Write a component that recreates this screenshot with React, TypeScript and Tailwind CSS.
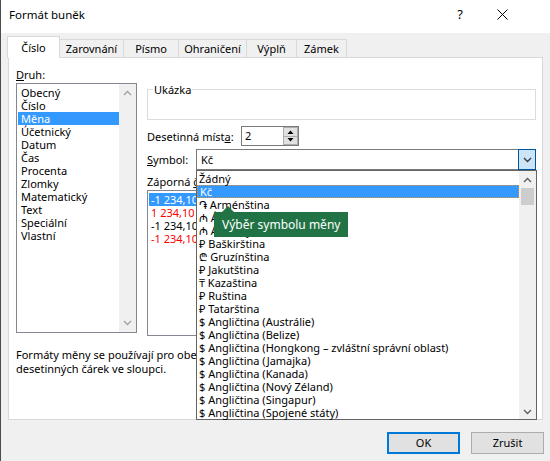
import React from "react";

const categories = [
  "Obecný",
  "Číslo",
  "Měna",
  "Účetnický",
  "Datum",
  "Čas",
  "Procenta",
  "Zlomky",
  "Matematický",
  "Text",
  "Speciální",
  "Vlastní",
];

const negatives = [
  { text: "-1 234,10 Kč", cls: "bg-[#3399ff] text-white" },
  { text: "1 234,10 Kč", cls: "text-[#ff0000]" },
  { text: "-1 234,10 Kč", cls: "text-black" },
  { text: "-1 234,10 Kč", cls: "text-[#ff0000]" },
];

const symbols = [
  "Žádný",
  "Kč",
  "֏ Arménština",
  "₼ Ázerbájdžánština (cyrilice)",
  "₼ Ázerbájdžánština (latinka)",
  "₽ Baškirština",
  "₾ Gruzínština",
  "₽ Jakutština",
  "₸ Kazaština",
  "₽ Ruština",
  "₽ Tatarština",
  "$ Angličtina (Austrálie)",
  "$ Angličtina (Belize)",
  "$ Angličtina (Hongkong – zvláštní správní oblast)",
  "$ Angličtina (Jamajka)",
  "$ Angličtina (Kanada)",
  "$ Angličtina (Nový Zéland)",
  "$ Angličtina (Singapur)",
  "$ Angličtina (Spojené státy)",
];

const tabs = [
  { label: "Zarovnání", w: "w-[65px]" },
  { label: "Písmo", w: "w-[56px]" },
  { label: "Ohraničení", w: "w-[69px]" },
  { label: "Výplň", w: "w-[51px]" },
  { label: "Zámek", w: "w-[51px]" },
];

function Chevron({ up, color }: { up?: boolean; color: string }) {
  return (
    <svg width="9" height="6" viewBox="0 0 9 6">
      <path
        d={up ? "M1 5 L4.5 1.5 L8 5" : "M1 1 L4.5 4.5 L8 1"}
        fill="none"
        stroke={color}
        strokeWidth="1.4"
      />
    </svg>
  );
}

function Triangle({ up }: { up?: boolean }) {
  return (
    <svg width="7" height="4" viewBox="0 0 7 4">
      <path d={up ? "M0.5 4 L3.5 0.5 L6.5 4 Z" : "M0.5 0 L3.5 3.5 L6.5 0 Z"} fill="#000" />
    </svg>
  );
}

export default function App() {
  return (
    <div className="relative w-[550px] h-[461px] overflow-hidden border-l border-[#4d4d4d] bg-[#f0f0f0] text-[11px] leading-[13px] text-black [font-family:'Noto_Sans',sans-serif]">
      {/* title bar */}
      <div className="h-[33px] bg-white">
        <div className="flex h-[28px] items-center pl-[8px]">
          <span className="text-[11.5px]">Formát buněk</span>
          <span className="ml-auto mr-[34px] text-[13px] leading-[13px]">?</span>
          <svg width="11" height="11" viewBox="0 0 11 11" className="mr-[42px]">
            <path d="M0.5 0.5 L10.5 10.5 M10.5 0.5 L0.5 10.5" stroke="#000" strokeWidth="1" />
          </svg>
        </div>
      </div>

      {/* tab strip */}
      <div className="flex h-[24px] items-end pl-[6px]">
        <div className="relative z-10 -mb-px flex h-[22px] w-[53px] items-center justify-center border border-b-0 border-[#d9d9d9] bg-white pb-[1px]">
          Číslo
        </div>
        {tabs.map((t) => (
          <div
            key={t.label}
            className={`-ml-px flex h-[18px] ${t.w} items-center justify-center border border-b-0 border-[#d9d9d9] bg-[#f0f0f0]`}
          >
            {t.label}
          </div>
        ))}
      </div>

      {/* tab page */}
      <div className="ml-[7px] h-[363px] w-[535px] border border-[#d9d9d9] bg-white">
        <div className="flex pl-[7px] pt-[10px]">
          {/* category column */}
          <div className="w-[121px]">
            <div className="h-[13px]">
              <span className="underline underline-offset-[1px]">D</span>ruh:
            </div>
            <div className="mt-[2px] flex h-[250px] border border-[#828790]">
              <div className="flex-1 pt-[2px]">
                {categories.map((c) => (
                  <div
                    key={c}
                    className={`ml-px h-[13px] pl-[3px] ${c === "Měna" ? "bg-[#3399ff] text-white" : ""}`}
                  >
                    {c}
                  </div>
                ))}
              </div>
              <div className="flex w-[17px] flex-col items-center justify-between bg-[#f0f0f0] py-[6px]">
                <Chevron up color="#a3a3a3" />
                <Chevron color="#a3a3a3" />
              </div>
            </div>
          </div>

          {/* settings column */}
          <div className="ml-[10px] mt-[21px] w-[389px]">
            <div className="relative h-[31px] border border-[#dcdcdc]">
              <span className="absolute -top-[7px] left-[5px] bg-white px-[1px]">Ukázka</span>
            </div>

            <div className="mt-[6px] flex h-[20px] items-center">
              <span className="w-[94px]">
                Desetinná míst<span className="underline underline-offset-[1px]">a</span>:
              </span>
              <div className="flex h-[20px] w-[58px] border border-[#7a7a7a] bg-white">
                <span className="flex-1 pl-[3px] leading-[18px]">2</span>
                <div className="flex w-[15px] flex-col">
                  <div className="flex flex-1 items-center justify-center border border-[#adadad] bg-[#e1e1e1]">
                    <Triangle up />
                  </div>
                  <div className="-mt-px flex flex-1 items-center justify-center border border-[#adadad] bg-[#e1e1e1]">
                    <Triangle />
                  </div>
                </div>
              </div>
            </div>

            <div className="mt-[3px] flex h-[21px] items-center">
              <span className="w-[49px]">
                <span className="underline underline-offset-[1px]">S</span>ymbol:
              </span>
              <div className="flex h-[21px] flex-1 border border-[#7a7a7a] bg-white">
                <span className="flex-1 pl-[4px] leading-[19px]">Kč</span>
                <div className="-my-px -mr-px flex w-[18px] items-center justify-center border border-[#005499] bg-[#cce4f7]">
                  <Chevron color="#3c3c3c" />
                </div>
              </div>
            </div>

            <div className="mt-[5px] h-[13px]">
              Záporná <span className="underline underline-offset-[1px]">č</span>ísla:
            </div>
            <div className="mt-[2px] h-[146px] border border-[#828790] pt-[2px]">
              {negatives.map((n, i) => (
                <div key={i} className={`mx-px h-[13px] pl-[2px] ${n.cls}`}>
                  {n.text}
                </div>
              ))}
            </div>
          </div>
        </div>

        <p className="mt-[12px] pl-[7px] leading-[14px]">
          Formáty měny se používají pro obecné peněžní hodnoty. Formáty Účetnický použijte pro zarovnání
          <br />
          desetinných čárek ve sloupci.
        </p>
      </div>

      {/* dialog buttons */}
      <div className="mt-[12px] flex justify-end gap-[11px] pr-[6px]">
        <button className="h-[22px] w-[73px] border-2 border-[#0078d7] bg-[#e1e1e1] leading-[16px]">OK</button>
        <button className="h-[22px] w-[73px] border border-[#adadad] bg-[#e1e1e1] leading-[18px]">Zrušit</button>
      </div>

      {/* open currency drop-down */}
      <div className="absolute left-[195px] top-[170px] flex h-[250px] w-[341px] border border-[#646464] bg-white">
        <div className="flex-1 pt-[1px]">
          {symbols.map((s) => (
            <div
              key={s}
              className={`h-[13px] whitespace-nowrap pl-[2px] ${
                s === "Kč" ? "border border-dotted border-[#e0913c] bg-[#3399ff] pl-[1px] leading-[11px] text-white" : ""
              }`}
            >
              {s}
            </div>
          ))}
        </div>
        <div className="flex w-[17px] flex-col items-center bg-[#f0f0f0] pb-[4px] pt-[6px]">
          <Chevron up color="#606060" />
          <div className="mt-[5px] h-[17px] w-[13px] bg-[#cdcdcd]" />
          <div className="mt-auto">
            <Chevron color="#606060" />
          </div>
        </div>
      </div>

      {/* tooltip */}
      <svg width="12" height="6" viewBox="0 0 12 6" className="absolute left-[221px] top-[206px]">
        <path d="M0 6 L6 0 L12 6 Z" fill="#217346" />
      </svg>
      <div className="absolute left-[213px] top-[212px] flex h-[25px] w-[134px] items-center bg-[#217346] pl-[8px] text-[12px] text-white">
        Výběr symbolu měny
      </div>
    </div>
  );
}
